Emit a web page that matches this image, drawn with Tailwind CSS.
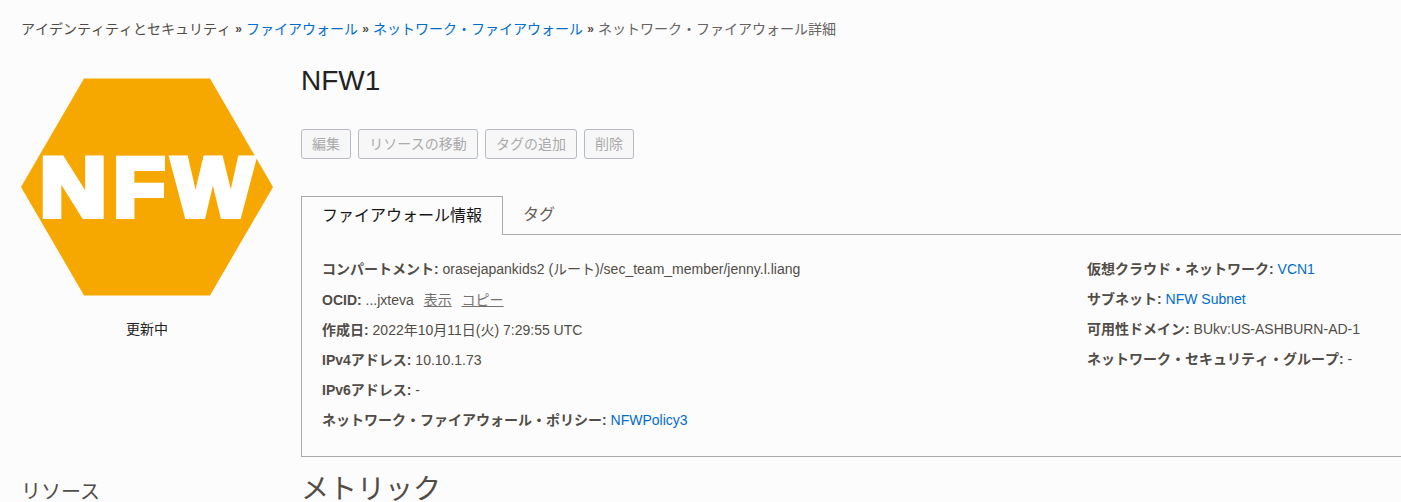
<!DOCTYPE html>
<html lang="ja">
<head>
<meta charset="utf-8">
<title>NFW1</title>
<script src="https://cdn.jsdelivr.net/npm/@tailwindcss/browser@4"></script>
</head>
<body class="h-[502px] w-[1401px] overflow-hidden bg-[#fcfcfc] font-['Liberation_Sans','Noto_Sans_CJK_JP',sans-serif] text-[14px] leading-5 text-[#514c47] whitespace-nowrap [&_b]:[font-kerning:none]">
<nav class="flex h-[58px] pt-[19px] pl-[21px] [font-kerning:none]">
  <span>アイデンティティとセキュリティ</span><span class="w-[15px] text-center text-[12px] font-bold">»</span>
  <a class="text-[#006dcc]">ファイアウォール</a><span class="w-[15px] text-center text-[12px] font-bold">»</span>
  <a class="text-[#006dcc]">ネットワーク・ファイアウォール</a><span class="w-[15px] text-center text-[12px] font-bold">»</span>
  <span class="text-[#66625f]">ネットワーク・ファイアウォール詳細</span>
</nav>
<div class="flex h-[444px] pl-[21px]">
  <aside class="flex w-[280px] shrink-0 flex-col">
    <svg class="mt-5 shrink-0" width="252" height="218" viewBox="0 0 252 218">
      <path d="M0 109 63 .6H189L252 109 189 217.400H63Z" fill="#f7a800"/>
      <g fill="#fff" stroke="#fff" stroke-width="6" font-family="Liberation Sans" font-weight="700" font-size="82.500">
        <text x="19" y="138" textLength="66.500" lengthAdjust="spacingAndGlyphs">N</text>
        <text x="92.500" y="138" textLength="51.500" lengthAdjust="spacingAndGlyphs">F</text>
        <text x="151.500" y="138" textLength="81" lengthAdjust="spacingAndGlyphs">W</text>
      </g>
    </svg>
    <p class="mt-[23px] w-[252px] text-center text-[#222]">更新中</p>
    <h2 class="mt-[138px] text-[20px] leading-[30px]">リソース</h2>
  </aside>
  <main class="min-w-0 flex-1">
    <h1 class="mt-[6px] text-[28px] leading-[34px] text-[#222]">NFW1</h1>
    <div class="mt-[31px] flex gap-[7px] text-[#aaa]">
      <button class="h-[30px] w-[50px] rounded-[3px] border border-[#b5bac3] bg-[#f7f7f8]">編集</button>
      <button class="h-[30px] w-[120px] rounded-[3px] border border-[#b5bac3] bg-[#f7f7f8]">リソースの移動</button>
      <button class="h-[30px] w-[92px] rounded-[3px] border border-[#b5bac3] bg-[#f7f7f8]">タグの追加</button>
      <button class="h-[30px] w-[50px] rounded-[3px] border border-[#b5bac3] bg-[#f7f7f8]">削除</button>
    </div>
    <div class="mt-[37px] flex h-[39px] text-[16px]">
      <div class="w-[202px] border-x border-t border-[#aaa] pt-[7px] pl-5 leading-6 text-[#161616]">ファイアウォール情報</div>
      <div class="flex-1 border-b border-[#aaa] pt-[7px] pl-5 leading-6 text-[#66625f]">タグ</div>
    </div>
    <section class="flex h-[222px] border-b border-l border-[#aaa] pt-[19px] pl-5 leading-[30px]">
      <div class="w-[765px] shrink-0">
        <p class="h-[31px]"><b>コンパートメント:</b> orasejapankids2 (ルート)/sec_team_member/jenny.l.liang</p>
        <p class="h-[30px]"><b>OCID:</b> ...jxteva <a class="ml-[6px] text-[#76726f] underline">表示</a> <a class="ml-[6px] text-[#76726f] underline">コピー</a></p>
        <p class="h-[30px]"><b>作成日:</b> 2022年10月11日(火) 7:29:55 UTC</p>
        <p class="h-[30px]"><b>IPv4アドレス:</b> 10.10.1.73</p>
        <p class="h-[30px]"><b>IPv6アドレス:</b> -</p>
        <p class="h-[30px]"><b>ネットワーク・ファイアウォール・ポリシー:</b> <a class="text-[#006dcc]">NFWPolicy3</a></p>
      </div>
      <div>
        <p class="h-[30px]"><b>仮想クラウド・ネットワーク:</b> <a class="text-[#006dcc]">VCN1</a></p>
        <p class="h-[30px]"><b>サブネット:</b> <a class="text-[#006dcc]">NFW Subnet</a></p>
        <p class="h-[30px]"><b>可用性ドメイン:</b> BUkv:US-ASHBURN-AD-1</p>
        <p class="h-[30px]"><b>ネットワーク・セキュリティ・グループ:</b> -</p>
      </div>
    </section>
    <h2 class="mt-[13px] text-[28px] leading-10">メトリック</h2>
  </main>
</div>
</body>
</html>
